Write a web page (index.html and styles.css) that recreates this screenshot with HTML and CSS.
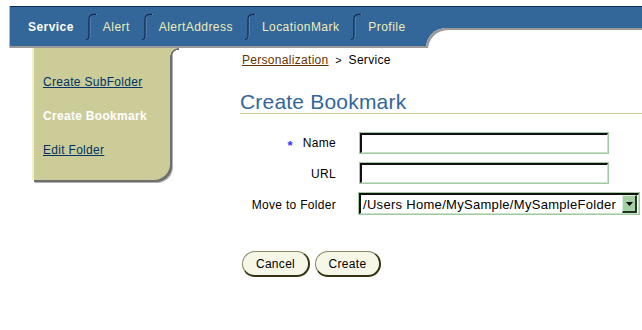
FILE: index.html
```html
<!DOCTYPE html>
<html lang="en">
<head>
  <meta charset="UTF-8" />
  <title>Create Bookmark</title>
  <link rel="stylesheet" href="styles.css">
</head>
<body>
  <div class="header">
    <div class="tabs">
      <span class="tab tab-active">Service</span>
      <svg class="sep" width="12" height="28" viewBox="0 0 12 28"><path d="M11 1.5 Q4 1 4 6 V23 Q4 26.5 1 26.5" fill="none" stroke="#6f8fbf" stroke-width="1" transform="translate(1,0)"/><path d="M11 1.5 Q4 1 4 6 V23 Q4 26.5 1 26.5" fill="none" stroke="#0d2a55" stroke-width="1.2"/></svg>
      <span class="tab">Alert</span>
      <svg class="sep" width="12" height="28" viewBox="0 0 12 28"><path d="M11 1.5 Q4 1 4 6 V23 Q4 26.5 1 26.5" fill="none" stroke="#6f8fbf" stroke-width="1" transform="translate(1,0)"/><path d="M11 1.5 Q4 1 4 6 V23 Q4 26.5 1 26.5" fill="none" stroke="#0d2a55" stroke-width="1.2"/></svg>
      <span class="tab">AlertAddress</span>
      <svg class="sep" width="12" height="28" viewBox="0 0 12 28"><path d="M11 1.5 Q4 1 4 6 V23 Q4 26.5 1 26.5" fill="none" stroke="#6f8fbf" stroke-width="1" transform="translate(1,0)"/><path d="M11 1.5 Q4 1 4 6 V23 Q4 26.5 1 26.5" fill="none" stroke="#0d2a55" stroke-width="1.2"/></svg>
      <span class="tab">LocationMark</span>
      <svg class="sep" width="12" height="28" viewBox="0 0 12 28"><path d="M11 1.5 Q4 1 4 6 V23 Q4 26.5 1 26.5" fill="none" stroke="#6f8fbf" stroke-width="1" transform="translate(1,0)"/><path d="M11 1.5 Q4 1 4 6 V23 Q4 26.5 1 26.5" fill="none" stroke="#0d2a55" stroke-width="1.2"/></svg>
      <span class="tab">Profile</span>
    </div>
    <div class="tabfill">
      <div class="tabfill-top"></div>
      <div class="notch"></div>
    </div>
  </div>

  <div class="main">
    <div class="sidebar">
      <a href="#" class="side-link">Create SubFolder</a>
      <span class="side-current">Create Bookmark</span>
      <a href="#" class="side-link">Edit Folder</a>
    </div>

    <div class="content">
      <div class="crumbs"><a href="#">Personalization</a> <span class="crumb-sep">&gt;</span> Service</div>
      <h1 class="page-title">Create Bookmark</h1>

      <div class="form">
        <label class="form-label"><span class="req">*</span>Name</label>
        <input type="text" class="text-field">
        <label class="form-label">URL</label>
        <input type="text" class="text-field">
        <label class="form-label">Move to Folder</label>
        <div class="choice">
          <span class="choice-value">/Users Home/MySample/MySampleFolder</span>
          <span class="choice-btn"><svg width="7" height="4" viewBox="0 0 7 4"><path d="M0 0 H7 L3.5 4 Z" fill="#000"/></svg></span>
        </div>
      </div>

      <div class="actions">
        <button class="btn btn-cancel">Cancel</button>
        <button class="btn btn-create">Create</button>
      </div>
    </div>
  </div>
</body>
</html>
```

FILE: styles.css
```css
body {
  margin: 0;
  padding: 0;
  font-family: "Liberation Sans", Arial, sans-serif;
  font-size: 12px;
  letter-spacing: 0.3px;
  background: #fff;
  color: #000;
}
.header {
  display: flex;
  margin: 6px 0 0 10px;
  height: 42px;
  box-shadow: -1px 0 0 #b8b8b8;
}
.tabs {
  display: flex;
  align-items: center;
  width: 398px;
  padding-left: 18px;
  background: #336699;
  border-top: 1px solid #0d2c5c;
  border-bottom: 2px solid #9a9a9a;
  padding-top: 1px;
  letter-spacing: 0.45px;
}
.tab {
  color: #eeeebb;
  white-space: nowrap;
}
.tab-active {
  color: #fff;
  font-weight: bold;
}
.sep {
  margin: 0 6px 0 11px;
  flex: none;
}
.tabfill {
  flex: 1;
  display: flex;
  flex-direction: column;
  background: #336699;
  border-top: 1px solid #0d2c5c;
}
.tabfill-top {
  height: 21px;
}
.notch {
  flex: 1;
  background: #fff;
  border-top-left-radius: 20px;
  box-shadow: inset 2px 2px 0 #9a9a9a;
}
.main {
  display: flex;
  padding-left: 32px;
}
.sidebar {
  position: relative;
  width: 127px;
  height: 105px;
  padding: 27px 0 0 9px;
  background: #cccc99;
  border-left: 2px solid #f2f2c8;
  border-bottom-right-radius: 16px;
  box-shadow: 2px 2px 0 #6e6e6e, 3px 3px 0 #b0b0b0;
  display: flex;
  flex-direction: column;
  gap: 20px;
}
.sidebar::after {
  content: "";
  position: absolute;
  top: 0;
  right: -9px;
  width: 9px;
  height: 9px;
  background: radial-gradient(circle at 100% 100%, transparent 7px, #6e6e6e 7.5px, #6e6e6e 8.5px, #cccc99 9px);
}
.side-link, .side-current {
  line-height: 14px;
  white-space: nowrap;
}
.side-link {
  color: #003366;
}
.side-current {
  color: #fff;
  font-weight: bold;
}
.content {
  flex: 1;
  margin-left: 70px;
  padding-top: 5px;
}
.crumbs {
  padding-left: 2px;
  line-height: 14px;
}
.crumbs a {
  color: #663300;
}
.crumb-sep {
  margin: 0 3px;
  font-size: 11px;
}
.page-title {
  margin: 24px 0 0 0;
  font-size: 21px;
  font-weight: normal;
  letter-spacing: 0.2px;
  color: #336699;
  line-height: 22px;
  padding-bottom: 0;
  border-bottom: 1px solid #cccc99;
}
.form {
  display: grid;
  grid-template-columns: 96px auto;
  column-gap: 23px;
  row-gap: 10px;
  margin-top: 19px;
  justify-content: start;
  align-items: center;
}
.form-label {
  text-align: right;
  white-space: nowrap;
  padding-top: 2px;
}
.req {
  color: #3333ff;
  font-size: 13px;
  font-weight: bold;
  vertical-align: -3px;
  margin-right: 10px;
}
.text-field {
  width: 241px;
  height: 17px;
  margin: 0 0 0 1px;
  padding: 0 2px;
  border-style: solid;
  border-width: 2px 1px 1px 2px;
  border-color: #111 #c8e2c8 #c8e2c8 #111;
  outline: 1px solid #a3c9a3;
  font: inherit;
}
.choice {
  display: flex;
  align-items: center;
  width: 277px;
  height: 18px;
  border-style: solid;
  border-width: 2px 1px 1px 2px;
  border-color: #111 #c8e2c8 #c8e2c8 #111;
  outline: 1px solid #a3c9a3;
}
.choice-value {
  flex: 1;
  padding-left: 2px;
  font-size: 13px;
  white-space: nowrap;
}
.choice-btn {
  display: flex;
  align-items: center;
  justify-content: center;
  width: 15px;
  height: 18px;
  margin-right: 1px;
  background: #a3cfa3;
  border-style: solid;
  border-width: 1px 2px 2px 1px;
  border-color: #e0f0e0 #223322 #223322 #e0f0e0;
  box-sizing: border-box;
}
.actions {
  display: flex;
  gap: 5px;
  margin-top: 37px;
  padding-left: 2px;
}
.btn {
  height: 26px;
  padding: 0;
  font: inherit;
  letter-spacing: 0.3px;
  background: #f7f7e8;
  color: #000;
  border-style: solid;
  border-width: 1px 2px 2px 1px;
  border-color: #8a8a66 #333311 #333311 #8a8a66;
  border-radius: 13px;
  cursor: pointer;
}
.btn-cancel {
  width: 68px;
}
.btn-create {
  width: 66px;
}
```
